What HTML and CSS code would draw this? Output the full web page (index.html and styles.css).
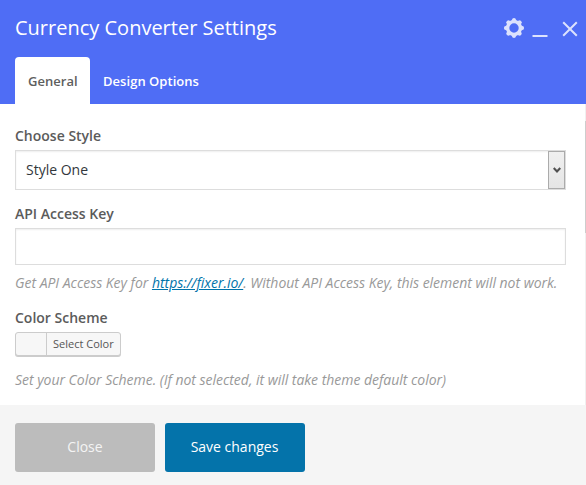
FILE: index.html
```html
<!DOCTYPE html>
<html lang="en">
<head>
<meta charset="utf-8">
<title>Currency Converter Settings</title>
<link rel="stylesheet" href="styles.css">
</head>
<body>
<div class="panel">
  <header class="header">
    <div class="titlebar">
      <h1 class="title">Currency Converter Settings</h1>
      <div class="controls">
        <svg class="icon-gear" viewBox="0 0 20 20" width="20" height="20"><g fill="currentColor"><path fill-rule="evenodd" d="M10 2a8 8 0 1 0 0 16a8 8 0 1 0 0-16zM10 5.3a4.7 4.7 0 1 1 0 9.4a4.7 4.7 0 1 1 0-9.4z"/><path id="tooth" d="M7.2 3.3L8.6.4Q10-.4 11.4.4L12.8 3.3z"/><use href="#tooth" transform="rotate(45 10 10)"/><use href="#tooth" transform="rotate(90 10 10)"/><use href="#tooth" transform="rotate(135 10 10)"/><use href="#tooth" transform="rotate(180 10 10)"/><use href="#tooth" transform="rotate(225 10 10)"/><use href="#tooth" transform="rotate(270 10 10)"/><use href="#tooth" transform="rotate(315 10 10)"/></g></svg>
        <svg class="icon-min" viewBox="0 0 16 20" width="16" height="20"><path d="M.5 18h15" stroke="currentColor" stroke-width="2"/></svg>
        <svg class="icon-close" viewBox="0 0 16 20" width="16" height="20"><path d="M1.2 4.2l13.6 13.6M14.8 4.2L1.2 17.8" stroke="currentColor" stroke-width="2"/></svg>
      </div>
    </div>
    <nav class="tabs">
      <span class="tab active">General</span>
      <span class="tab">Design Options</span>
    </nav>
  </header>
  <main class="content">
    <div class="fields">
      <div class="label">Choose Style</div>
      <div class="select"><span class="value">Style One</span><span class="arrow"><svg viewBox="0 0 8 7" width="8" height="7"><path d="M.7 1L4 4.5L7.3 1" fill="none" stroke="#505050" stroke-width="2.2"/></svg></span></div>
      <div class="label label-key">API Access Key</div>
      <input class="input" type="text">
      <p class="hint">Get API Access Key for <a href="#">https://fixer.io/</a>. Without API Access Key, this element will not work.</p>
      <div class="label label-color">Color Scheme</div>
      <div class="picker"><span class="picker-text">Select Color</span></div>
      <p class="hint hint-color">Set your Color Scheme. (If not selected, it will take theme default color)</p>
    </div>
    <div class="scroll"><div class="thumb"></div></div>
  </main>
  <footer class="footer">
    <span class="button">Close</span>
    <span class="button primary">Save changes</span>
  </footer>
</div>
</body>
</html>
```
FILE: styles.css
```css
* { box-sizing: border-box; }
body { margin: 0; font-family: "Open Sans", sans-serif; font-size: 14px; background: #fff; }
.panel { height: 485px; display: flex; flex-direction: column; overflow: hidden; }
.header { height: 104px; background: #4f6df5; color: #fff; padding: 0 8px 0 15px; flex: none; }
.titlebar { height: 57px; display: flex; justify-content: space-between; }
.title { margin: 14px 0 0; font-size: 20px; line-height: 27px; font-weight: 400; color: #fff; white-space: nowrap; }
.controls { display: flex; padding-top: 18px; color: #dce2fd; }
.controls svg { display: block; }
.icon-min { margin-left: 8px; }
.icon-close { margin-left: 14px; }
.tabs { display: flex; height: 47px; font-size: 13px; font-weight: 600; line-height: 49px; }
.tab { padding: 0 13px; color: #fff; white-space: nowrap; letter-spacing: .04px; }
.tab.active { width: 75px; background: #fff; color: #5e5e5e; border-radius: 4px 4px 0 0; }
.content { height: 301px; display: flex; flex: none; }
.fields { flex: 1; padding: 22px 19px 0 15px; }
.label { height: 20px; line-height: 20px; margin-bottom: 4px; font-weight: 600; color: #5b5b5b; }
.select { height: 40px; border: 1px solid #ddd; display: flex; justify-content: space-between; box-shadow: inset 0 1px 2px rgba(0,0,0,.07); color: #32373c; }
.value { padding-left: 10px; line-height: 38px; }
.arrow { width: 17px; border: 1px solid #ababab; background: linear-gradient(#f0f0f0, #e5e5e5); display: flex; align-items: center; justify-content: center; }
.label-key { margin-top: 14px; }
.input { display: block; width: 100%; height: 37px; border: 1px solid #ddd; background: #fff; box-shadow: inset 0 1px 2px rgba(0,0,0,.07); outline: 0; padding: 0 10px; font: inherit; }
.hint { margin: 8px 0 0; line-height: 20px; font-style: italic; color: #999; white-space: nowrap; letter-spacing: -.024px; }
.hint a { color: #0073aa; }
.label-color { margin-top: 15px; }
.picker { width: 106px; height: 24px; border: 1px solid #ccc; border-radius: 3px; background: #f7f7f7; box-shadow: 0 1px 0 #ccc; padding-left: 30px; }
.picker-text { display: block; height: 22px; line-height: 22px; border-left: 1px solid #ccc; padding-left: 6px; font-size: 11px; color: #555; white-space: nowrap; }
.hint-color { margin-top: 14px; }
.scroll { width: 1px; background: #f0f0f0; padding-top: 17px; }
.thumb { height: 112px; background: #cdcdcd; }
.footer { flex: 1; background: #f5f5f5; padding: 18px 15px 0; display: flex; gap: 10px; }
.button { width: 140px; height: 49px; line-height: 48px; border-radius: 3px; text-align: center; background: #bcbcbc; color: #f4f4f4; }
.button.primary { background: #0473aa; color: #fff; padding-right: 1px; }
```
